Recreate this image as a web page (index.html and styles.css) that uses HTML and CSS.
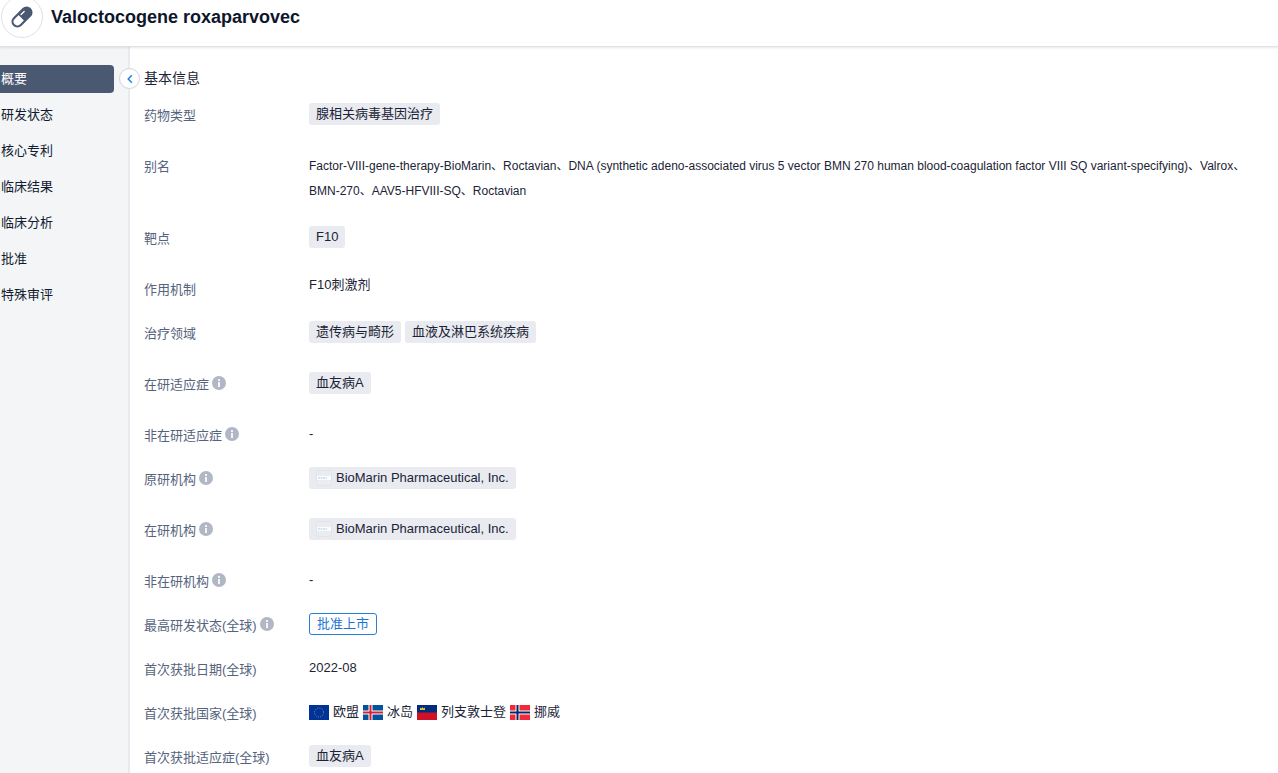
FILE: index.html
```html
<!DOCTYPE html>
<html lang="zh-CN">
<head>
    <meta charset="UTF-8">
    <meta name="viewport" content="width=device-width, initial-scale=1.0">
    <title>Valoctocogene roxaparvovec</title>
    <link rel="stylesheet" href="styles.css">
</head>
<body>
    <svg class="defs" aria-hidden="true">
        <symbol id="info" viewBox="0 0 14 14">
            <circle cx="7" cy="7" r="7" fill="#b1b7c5"/>
            <path d="M6 3h2v2H6zM6 6h2v5H6z" fill="#f4f5f8"/>
        </symbol>
        <symbol id="company" viewBox="0 0 16 16">
            <rect x=".5" y=".5" width="15" height="15" rx="2" fill="#ebecf0" stroke="#e1e4ea"/>
            <path d="M1 6h14v4H1z" fill="#fafcfd"/>
            <path d="M2 8h9" stroke="#a9d3e2" stroke-dasharray="2 .5"/>
        </symbol>
    </svg>

    <header class="header">
        <span class="drug-icon">
            <svg width="26" height="26" viewBox="0 0 24 24">
                <g transform="rotate(-45 12 12)">
                    <rect x="1.500" y="7.500" width="21" height="9" rx="4.500" fill="#fff" stroke="#4a5872" stroke-width="2"/>
                    <path d="M11 7.500h7a4.500 4.500 0 0 1 0 9h-7z" fill="#4a5872"/>
                    <path d="M13 9.800h4" stroke="#fff" stroke-width="1.200" stroke-linecap="round"/>
                </g>
            </svg>
        </span>
        <h1>Valoctocogene roxaparvovec</h1>
    </header>

    <div class="page">
        <aside class="sidebar">
            <nav>
                <a class="active" href="#overview">概要</a>
                <a href="#status">研发状态</a>
                <a href="#patent">核心专利</a>
                <a href="#result">临床结果</a>
                <a href="#analysis">临床分析</a>
                <a href="#approval">批准</a>
                <a href="#review">特殊审评</a>
            </nav>
            <button class="collapse" type="button" aria-label="收起">
                <svg width="8" height="10" viewBox="0 0 8 10"><path d="M5.800 1.200 2.200 5l3.600 3.800" fill="none" stroke="#2482e0" stroke-width="1.500"/></svg>
            </button>
        </aside>

        <main class="content" id="overview">
            <h2>基本信息</h2>
            <dl>
                <div class="row">
                    <dt>药物类型</dt>
                    <dd class="tags"><span class="tag">腺相关病毒基因治疗</span></dd>
                </div>
                <div class="row">
                    <dt>别名</dt>
                    <dd class="alias">Factor-VIII-gene-therapy-BioMarin、Roctavian、DNA (synthetic adeno-associated virus 5 vector BMN 270 human blood-coagulation factor VIII SQ variant-specifying)、Valrox、<br>BMN-270、AAV5-HFVIII-SQ、Roctavian</dd>
                </div>
                <div class="row">
                    <dt>靶点</dt>
                    <dd class="tags"><span class="tag">F10</span></dd>
                </div>
                <div class="row">
                    <dt>作用机制</dt>
                    <dd class="mechanism">F10刺激剂</dd>
                </div>
                <div class="row">
                    <dt>治疗领域</dt>
                    <dd class="tags"><span class="tag">遗传病与畸形</span><span class="tag">血液及淋巴系统疾病</span></dd>
                </div>
                <div class="row">
                    <dt>在研适应症<svg class="info"><use href="#info"/></svg></dt>
                    <dd class="tags"><span class="tag">血友病A</span></dd>
                </div>
                <div class="row">
                    <dt>非在研适应症<svg class="info"><use href="#info"/></svg></dt>
                    <dd>-</dd>
                </div>
                <div class="row">
                    <dt>原研机构<svg class="info"><use href="#info"/></svg></dt>
                    <dd class="tags"><span class="tag"><svg class="company"><use href="#company"/></svg>BioMarin Pharmaceutical, Inc.</span></dd>
                </div>
                <div class="row">
                    <dt>在研机构<svg class="info"><use href="#info"/></svg></dt>
                    <dd class="tags"><span class="tag"><svg class="company"><use href="#company"/></svg>BioMarin Pharmaceutical, Inc.</span></dd>
                </div>
                <div class="row">
                    <dt>非在研机构<svg class="info"><use href="#info"/></svg></dt>
                    <dd>-</dd>
                </div>
                <div class="row">
                    <dt>最高研发状态(全球)<svg class="info"><use href="#info"/></svg></dt>
                    <dd><span class="status">批准上市</span></dd>
                </div>
                <div class="row">
                    <dt>首次获批日期(全球)</dt>
                    <dd>2022-08</dd>
                </div>
                <div class="row">
                    <dt>首次获批国家(全球)</dt>
                    <dd class="countries">
                        <span class="country">
                            <svg class="flag" viewBox="0 0 20 15"><path d="M0 0h20v15H0z" fill="#039"/><circle cx="10" cy="7.500" r="4.500" fill="none" stroke="#b5a94a" stroke-width=".9" stroke-dasharray=".9 1.456"/></svg>
                            欧盟
                        </span>
                        <span class="country">
                            <svg class="flag" viewBox="0 0 20 15"><path d="M0 0h20v15H0z" fill="#02529c"/><path d="M7.500 0v15M0 7.500h20" stroke="#fff" stroke-width="4"/><path d="M7.500 0v15M0 7.500h20" stroke="#dc1e35" stroke-width="2"/></svg>
                            冰岛
                        </span>
                        <span class="country">
                            <svg class="flag" viewBox="0 0 20 15"><path d="M0 0h20v8H0z" fill="#002b7f"/><path d="M0 7.500h20V15H0z" fill="#ce1126"/><path d="M3 5V2.500l1.500 1 1-1.500 1 1.500 1.500-1V5z" fill="#e5c33b"/></svg>
                            列支敦士登
                        </span>
                        <span class="country">
                            <svg class="flag" viewBox="0 0 20 15"><path d="M0 0h20v15H0z" fill="#ef2b3b"/><path d="M7.500 0v15M0 7.500h20" stroke="#fff" stroke-width="4"/><path d="M7.500 0v15M0 7.500h20" stroke="#002868" stroke-width="2"/></svg>
                            挪威
                        </span>
                    </dd>
                </div>
                <div class="row">
                    <dt>首次获批适应症(全球)</dt>
                    <dd class="tags"><span class="tag">血友病A</span></dd>
                </div>
            </dl>
        </main>
    </div>
</body>
</html>
```
FILE: styles.css
```css
* {
    box-sizing: border-box;
}
html, body {
    height: 100%;
}
body {
    margin: 0;
    display: flex;
    flex-direction: column;
    overflow: hidden;
    font-family: "Liberation Sans", "Noto Sans CJK SC", sans-serif;
    font-size: 13px;
    color: #1b2436;
    background-color: #fff;
}
.defs {
    display: none;
}

/* ヘッダー */
.header {
    display: flex;
    flex: none;
    align-items: center;
    gap: 8px;
    padding: 0 0 8px 1px;
    border-bottom: 1px solid #dfe1e6;
    box-shadow: 0 1px 2px rgba(30, 40, 60, 0.1);
    z-index: 1;
}
.drug-icon {
    display: flex;
    align-items: center;
    justify-content: center;
    width: 42px;
    height: 42px;
    margin-top: -4px;
    border: 1px solid #dfe1e8;
    border-radius: 50%;
}
h1 {
    margin: 0 0 4px;
    font-size: 18px;
    line-height: 24px;
    color: #0e162b;
}

.page {
    display: flex;
    flex: 1;
    min-height: 0;
}

/* サイドバー */
.sidebar {
    position: relative;
    flex: none;
    width: 130px;
    padding: 18px 14px 0 0;
    background-color: #f3f5f7;
    border-right: 2px solid #e9eaf0;
}
nav {
    display: flex;
    flex-direction: column;
    gap: 8px;
}
nav a {
    padding-left: 1px;
    line-height: 28px;
    color: #111a2e;
    text-decoration: none;
    border-radius: 0 4px 4px 0;
}
nav .active {
    color: #fff;
    background-color: #4a5872;
}
.collapse {
    position: absolute;
    top: 21px;
    right: -12px;
    display: flex;
    align-items: center;
    justify-content: center;
    width: 21px;
    height: 21px;
    padding: 0;
    background-color: #fff;
    border: 1px solid #cfd3dc;
    border-radius: 50%;
}

/* 基本情報 */
.content {
    flex: 1;
    min-width: 0;
    padding: 21px 0 0 14px;
}
h2 {
    margin: 0 0 15px;
    font-size: 14px;
    font-weight: normal;
    line-height: 20px;
}
dl {
    margin: 0;
    display: flex;
    flex-direction: column;
    gap: 22px;
}
.row {
    display: grid;
    grid-template-columns: 165px 1fr;
}
dt {
    display: flex;
    align-items: center;
    gap: 3px;
    height: 22px;
    color: #56637d;
}
dd {
    margin: 0;
    line-height: 22px;
}
.info {
    width: 14px;
    height: 14px;
}
.tags {
    display: flex;
    gap: 4px;
    padding-bottom: 7px;
}
.tag {
    display: flex;
    align-items: center;
    gap: 4px;
    height: 22px;
    padding: 0 7px;
    background-color: #e9ebf0;
    border-radius: 3px;
}
.company {
    width: 16px;
    height: 16px;
}
.alias {
    font-size: 12px;
    line-height: 25px;
}
.mechanism {
    line-height: 16px;
}
.status {
    display: block;
    width: fit-content;
    padding: 0 7px;
    line-height: 20px;
    color: #1b76d2;
    border: 1px solid #2680d9;
    border-radius: 3px;
}
.countries {
    display: flex;
    gap: 4px;
}
.country {
    display: flex;
    align-items: center;
    gap: 4px;
}
.flag {
    width: 20px;
    height: 15px;
}
```
